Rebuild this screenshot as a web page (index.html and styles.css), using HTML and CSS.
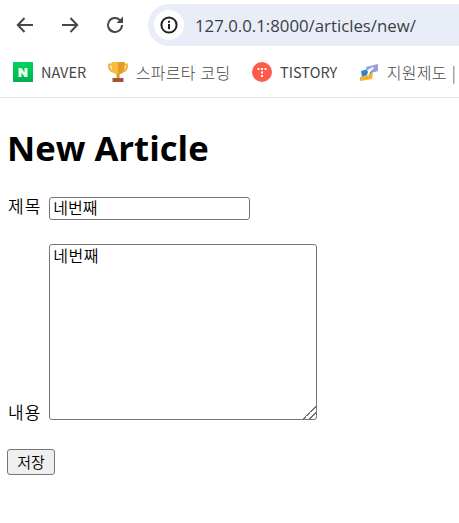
FILE: index.html
```html
<!DOCTYPE html>
<html lang="ko">
<head>
<meta charset="utf-8">
<title>New Article</title>
<link rel="stylesheet" href="styles.css">
</head>
<body>
<header class="chrome">
  <div class="toolbar">
    <svg class="nav-icon" viewBox="0 0 24 24"><path d="M20 12H5M11.500 5 4.800 12l6.700 7"/></svg>
    <svg class="nav-icon" viewBox="0 0 24 24"><path d="M4 12h15M12.500 5l6.700 7-6.700 7"/></svg>
    <svg class="nav-icon" viewBox="0 0 24 24"><path d="M19 12a7 7 0 1 1-2.200-5.100L19 9"/><path class="fill" d="M20 3.500V10h-6.500z"/></svg>
    <div class="omnibox">
      <span class="info">
        <svg viewBox="0 0 20 20" width="20" height="20"><circle cx="10" cy="10" r="7.600" class="info-ring"/><rect x="9" y="9" width="2" height="5.200" fill="#202124"/><rect x="9" y="5.800" width="2" height="2" fill="#202124"/></svg>
      </span>
      <span class="url">127.0.0.1:8000/articles/new/</span>
    </div>
  </div>
  <nav class="bookmarks">
    <span class="bookmark">
      <svg class="favicon" viewBox="0 0 20 20"><defs><linearGradient id="naver" x1="0" y1="0" x2="0" y2="1"><stop offset="0" stop-color="#00d45f"/><stop offset="1" stop-color="#00b04f"/></linearGradient></defs><rect width="20" height="20" fill="url(#naver)"/><path fill="#e8fff0" d="M5.500 6h3l3 4.400V6h3v9h-3L8.500 10.600V15h-3z"/></svg>
      <span>NAVER</span>
    </span>
    <span class="bookmark">
      <svg class="favicon" viewBox="0 0 20 20"><path fill="none" stroke="#f2b23e" stroke-width="2.200" d="M4 2.500H1.200v2c0 3 2 4.800 5 5.300M16 2.500h2.800v2c0 3-2 4.800-5 5.300"/><path fill="#f7bc3f" d="M3.500 0h13v5.500c0 4.500-3.500 7-6.500 7s-6.500-2.500-6.500-7z"/><path fill="#e59a2a" d="M10 0h6.500v5.500c0 4.500-3.500 7-6.500 7z"/><rect x="8.500" y="12" width="3" height="4" fill="#e09a30"/><rect x="4.500" y="16" width="11" height="4" fill="#a5552f"/></svg>
      <span class="ko">스파르타 코딩</span>
    </span>
    <span class="bookmark">
      <svg class="favicon" viewBox="0 0 20 20"><circle cx="10" cy="10" r="10" fill="#ff5a4a"/><g fill="#fff"><rect x="5.500" y="6" width="2" height="2"/><rect x="9" y="6" width="2" height="2"/><rect x="12.500" y="6" width="2" height="2"/><rect x="9" y="9.500" width="2" height="2"/><rect x="9" y="13" width="2" height="2"/></g></svg>
      <span>TISTORY</span>
    </span>
    <span class="bookmark">
      <svg class="favicon" viewBox="0 0 20 20"><path fill="#9b9fd8" d="M7 5l12-3v7L9 12z"/><path fill="#2d86c9" d="M2 9l11-3-1 6-9 3z"/><path fill="#f4b02e" d="M1 15l13-4-1 6-12 2z"/><path fill="#fff" d="M8 8l6-3 1 1-3 3-3 5-1-1 1-3z"/></svg>
      <span class="ko">지원제도 |</span>
    </span>
  </nav>
</header>
<main class="page">
  <h1 class="title">New Article</h1>
  <form class="article-form">
    <p class="field"><label class="field-label" for="title">제목</label><input class="title-input" id="title" type="text" value="네번째"></p>
    <p class="field"><label class="field-label" for="content">내용</label><textarea class="content-input" id="content">네번째</textarea></p>
    <button class="save" type="button">저장</button>
  </form>
</main>
</body>
</html>
```
FILE: styles.css
```css
* { box-sizing: border-box; }
html, body { margin: 0; height: 100%; overflow: hidden; background: #fff; }
body { font-family: "Noto Sans CJK KR", "Noto Sans", sans-serif; color: #000; }

.chrome { height: 98px; border-bottom: 1px solid #e2e3e5; }
.toolbar { height: 50px; display: flex; align-items: center; padding: 0 0 0 13px; }
.nav-icon { width: 24px; height: 24px; margin-right: 21px; fill: none; stroke: #474747; stroke-width: 2; flex: none; }
.nav-icon .fill { fill: #474747; stroke: none; }
.omnibox { flex: none; width: 320px; height: 42px; border-radius: 21px 0 0 21px; background: #e9edf7; display: flex; align-items: center; padding-left: 6px; }
.info { width: 30px; height: 30px; border-radius: 50%; background: #fff; display: flex; align-items: center; justify-content: center; flex: none; }
.info-ring { fill: none; stroke: #202124; stroke-width: 2; }
.url { margin-left: 11px; font-family: "Open Sans", sans-serif; font-size: 16.800px; line-height: 24px; padding-top: 1px; color: #3c4043; white-space: nowrap; }

.bookmarks { height: 47px; display: flex; align-items: center; padding: 0 0 4px 13px; gap: 21.500px; white-space: nowrap; overflow: hidden; font-size: 14.500px; color: #474747; }
.bookmark { display: flex; align-items: center; gap: 8px; flex: none; }
.ko { font-size: 16px; letter-spacing: 0.300px; font-weight: 300; }
.favicon { width: 20px; height: 20px; flex: none; }

.page { padding: 0 8px; }
.title { margin: 24px 0 19px -1px; font-family: "Open Sans", sans-serif; font-size: 34.700px; line-height: 52px; font-weight: 700; }
.field { margin: 0 0 24px; font-size: 17px; }
.field-label { letter-spacing: 1px; margin-right: 8px; vertical-align: 1px; font-weight: 350; }
.title-input { width: 201px; height: 23px; font: 350 16px "Noto Sans CJK KR", sans-serif; padding: 0 3px 2px; color: #000; border: 1px solid #767676; border-radius: 3px; }
.content-input { width: 268px; height: 176px; font: 350 16px/20px "Noto Sans CJK KR", sans-serif; padding: 0 3px; letter-spacing: 0.500px; color: #000; border: 1px solid #767676; border-radius: 3px; margin: 0; }
.content-input::-webkit-resizer { background: linear-gradient(135deg, transparent 54%, #707070 54% 60%, transparent 60% 75%, #707070 75% 81%, transparent 81%); }
.save { display: block; width: 48px; height: 26px; margin-left: -1px; padding: 0; font: 350 15px "Noto Sans CJK KR", sans-serif; color: #000; background: #efefef; border: 1px solid #767676; border-radius: 3px; }
```
